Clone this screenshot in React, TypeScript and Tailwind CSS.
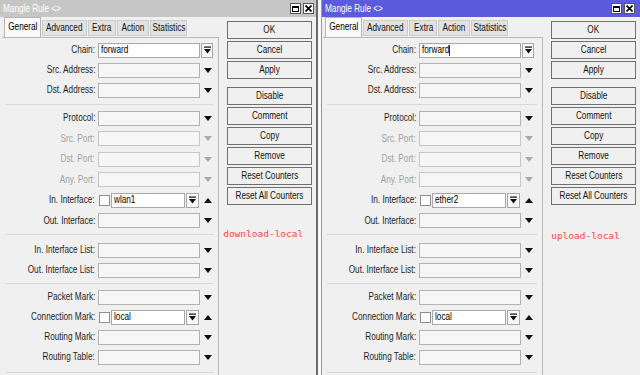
import React from 'react'

type Kind = 'chain' | 'combo' | 'disabled' | 'check'
type Field = { label: string; kind: Kind; value?: string }

const ui = "font-['Liberation_Sans',Arial,sans-serif]"

const tabs = [
  { name: 'General', w: 'w-[37px]' },
  { name: 'Advanced', w: 'w-[45px]' },
  { name: 'Extra', w: 'w-[28px]' },
  { name: 'Action', w: 'w-[32px]' },
  { name: 'Statistics', w: 'w-[37px]' },
]

const buttons = ['OK', 'Cancel', 'Apply', 'Disable', 'Comment', 'Copy', 'Remove', 'Reset Counters', 'Reset All Counters']

function sectionsFor(iface: string): Field[][] {
  return [
    [
      { label: 'Chain', kind: 'chain', value: 'forward' },
      { label: 'Src. Address', kind: 'combo' },
      { label: 'Dst. Address', kind: 'combo' },
    ],
    [
      { label: 'Protocol', kind: 'combo' },
      { label: 'Src. Port', kind: 'disabled' },
      { label: 'Dst. Port', kind: 'disabled' },
      { label: 'Any. Port', kind: 'disabled' },
      { label: 'In. Interface', kind: 'check', value: iface },
      { label: 'Out. Interface', kind: 'combo' },
    ],
    [
      { label: 'In. Interface List', kind: 'combo' },
      { label: 'Out. Interface List', kind: 'combo' },
    ],
    [
      { label: 'Packet Mark', kind: 'combo' },
      { label: 'Connection Mark', kind: 'check', value: 'local' },
      { label: 'Routing Mark', kind: 'combo' },
      { label: 'Routing Table', kind: 'combo' },
    ],
  ]
}

// winbox text is narrow, squeeze it
function T({ children, o }: { children: React.ReactNode; o: string }) {
  return <span className={`inline-block whitespace-nowrap scale-x-[0.82] ${o}`}>{children}</span>
}

function DownBar() {
  return (
    <svg width="7" height="8" viewBox="0 0 7 8">
      <rect x="0" y="0.5" width="7" height="1.2" fill="#111" />
      <path d="M0 3h7L3.5 7.5z" fill="#111" />
    </svg>
  )
}

function Tri({ up, muted }: { up?: boolean; muted?: boolean }) {
  return (
    <svg width="8" height="5" viewBox="0 0 8 5">
      <path d={up ? 'M0 5h8L4 0z' : 'M0 0h8L4 5z'} fill={muted ? '#a9a9a9' : '#111'} />
    </svg>
  )
}

function FieldRow({ f, tall, caret }: { f: Field; tall?: boolean; caret?: boolean }) {
  const muted = f.kind === 'disabled'
  return (
    <div className={`flex items-center ${tall ? 'h-[20.5px]' : 'h-[20px]'}`}>
      <div className={`w-[93px] flex justify-end ${muted ? 'text-[#a0a0a0]' : 'text-[#1e1e1e]'}`}>
        <T o="origin-right">{f.label}:</T>
      </div>
      {f.kind === 'chain' && (
        <>
          <div className="ml-[3px] w-[102px] h-[15px] bg-white border border-[#a8a8a8] flex items-center pl-[2px] text-black">
            <T o="origin-left">
              {f.value}
              {caret && <span className="inline-block align-middle w-px h-[11px] bg-black" />}
            </T>
          </div>
          <div className="ml-[1px] w-[12px] h-[15px] bg-[#f7f7f7] border border-[#a8a8a8] flex items-center justify-center">
            <DownBar />
          </div>
        </>
      )}
      {(f.kind === 'combo' || f.kind === 'disabled') && (
        <>
          <div className={`ml-[3px] w-[102px] h-[15px] bg-[#f6f6f6] border ${muted ? 'border-[#c6c6c6]' : 'border-[#b2b2b2]'}`} />
          <div className="ml-[1px] w-[14px] flex justify-center">
            <Tri muted={muted} />
          </div>
        </>
      )}
      {f.kind === 'check' && (
        <>
          <div className="ml-[4px] w-[11px] h-[11px] bg-white border border-[#8e8e8e]" />
          <div className="ml-[1px] w-[74px] h-[15px] bg-white border border-[#a8a8a8] flex items-center pl-[2px] text-black">
            <T o="origin-left">{f.value}</T>
          </div>
          <div className="ml-[1px] w-[13px] h-[15px] bg-[#f7f7f7] border border-[#a8a8a8] flex items-center justify-center">
            <DownBar />
          </div>
          <div className="ml-[2px] w-[14px] flex justify-center">
            <Tri up />
          </div>
        </>
      )}
    </div>
  )
}

function Sep({ cls }: { cls: string }) {
  return <div className={`h-px bg-[#d8d8d8] ml-[4px] mr-[5px] ${cls}`} />
}

function TitleButtons() {
  return (
    <div className="flex gap-[2px]">
      <div className="w-[11px] h-[11px] bg-white border border-[#555] flex items-center justify-center">
        <div className="w-[7px] h-[6px] border border-black border-t-2" />
      </div>
      <div className="w-[11px] h-[11px] bg-white border border-[#555] flex items-center justify-center">
        <svg width="7" height="7" viewBox="0 0 7 7">
          <path d="M0.5 0.5l6 6M6.5 0.5l-6 6" stroke="#000" strokeWidth="1.6" />
        </svg>
      </div>
    </div>
  )
}

function Window({ outer, titleBg, titlePr, pl, colPl, noteCls, note, iface, caret }: {
  outer: string; titleBg: string; titlePr: string; pl: string; colPl: string; noteCls: string; note: string; iface: string; caret?: boolean
}) {
  const sections = sectionsFor(iface)
  return (
    <div className={`h-full flex flex-col bg-[#f0f0f0] ${outer}`}>
      <div className={`h-[17px] flex items-center justify-between pl-[3px] ${titlePr} ${titleBg}`}>
        <span className="text-white">
          <T o="origin-left">Mangle Rule &lt;&gt;</T>
        </span>
        <TitleButtons />
      </div>
      <div className={`flex flex-1 ${pl}`}>
        <div className="w-[220px] flex flex-col">
          <div className="h-[20px] flex items-end pl-[2px] gap-[1px]">
            {tabs.map((t, i) =>
              i === 0 ? (
                <div key={t.name} className={`${t.w} h-[20px] bg-[#fafafa] border border-b-0 border-[#b4b4b4] flex justify-center pt-[4px] text-black`}>
                  <T o="origin-center">{t.name}</T>
                </div>
              ) : (
                <div key={t.name} className={`${t.w} h-[16px] mb-[1px] bg-[#e2e2e2] border border-[#cbcbcb] flex items-center justify-center text-[#111]`}>
                  <T o="origin-center">{t.name}</T>
                </div>
              )
            )}
          </div>
          <div className="flex-1 border-t border-r border-[#b8b8b8] bg-[#f0f0f0]">
            <div className="pt-[2px]">
              {sections[0].map((f) => <FieldRow key={f.label} f={f} caret={caret} />)}
            </div>
            <Sep cls="mt-[4px] mb-[3px]" />
            {sections[1].map((f) => <FieldRow key={f.label} f={f} tall />)}
            <Sep cls="mt-[3px] mb-[5px]" />
            {sections[2].map((f) => <FieldRow key={f.label} f={f} />)}
            <Sep cls="mt-[3px] mb-[3px]" />
            {sections[3].map((f) => <FieldRow key={f.label} f={f} />)}
            <Sep cls="mt-[5px]" />
          </div>
        </div>
        <div className={`flex-1 flex flex-col pt-[4px] pr-[4px] ${colPl}`}>
          {buttons.map((b) => (
            <div key={b} className={`h-[18px] mb-[2px] border border-[#6f6f6f] bg-[#f0f0f0] flex items-center justify-center text-[#111] ${b === 'Disable' ? 'mt-[6px]' : ''}`}>
              <T o="origin-center">{b}</T>
            </div>
          ))}
          <div className={`font-['DejaVu_Sans_Mono',monospace] text-[9.5px] text-[#ff4646] ${noteCls}`}>{note}</div>
        </div>
      </div>
    </div>
  )
}

export default function App() {
  return (
    <div className={`w-[640px] h-[375px] flex overflow-hidden bg-white text-[10px] leading-none ${ui}`}>
      <Window
        outer="w-[318px] border-r-2 border-[#6a6a6a]"
        titleBg="bg-[#c6c6c6]"
        titlePr="pr-[2px]"
        pl="pl-[2px]"
        colPl="pl-[8px]"
        noteCls="mt-[22px] -ml-[4px]"
        note="download-local"
        iface="wlan1"
      />
      <div className="w-[4px] h-full bg-[#f8f8f8]" />
      <Window
        outer="flex-1 border-l border-[#9a9a9a]"
        titleBg="bg-[#5b5bdc]"
        titlePr="pr-[5px]"
        pl="pl-[1px]"
        colPl="pl-[8px]"
        noteCls="mt-[24px]"
        note="upload-local"
        iface="ether2"
        caret
      />
    </div>
  )
}
